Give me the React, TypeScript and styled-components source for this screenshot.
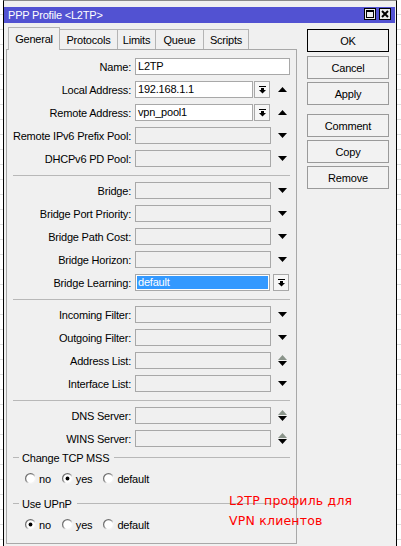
import { Fragment, useId } from "react";
import styled, { createGlobalStyle } from "styled-components";

type FieldKind = "text" | "combo" | "select" | "spin" | "pick";

type Field = {
  label: string;
  kind: FieldKind;
  value?: string;
};

const tabs = [
  { label: "General", width: 52, active: true },
  { label: "Protocols", width: 59 },
  { label: "Limits", width: 39 },
  { label: "Queue", width: 49 },
  { label: "Scripts", width: 46 },
];

const actions = [
  { label: "OK", primary: true },
  { label: "Cancel" },
  { label: "Apply" },
  { label: "Comment", spaced: true },
  { label: "Copy" },
  { label: "Remove" },
];

const sections: Field[][] = [
  [
    { label: "Name", kind: "text", value: "L2TP" },
    { label: "Local Address", kind: "combo", value: "192.168.1.1" },
    { label: "Remote Address", kind: "combo", value: "vpn_pool1" },
    { label: "Remote IPv6 Prefix Pool", kind: "select" },
    { label: "DHCPv6 PD Pool", kind: "select" },
  ],
  [
    { label: "Bridge", kind: "select" },
    { label: "Bridge Port Priority", kind: "select" },
    { label: "Bridge Path Cost", kind: "select" },
    { label: "Bridge Horizon", kind: "select" },
    { label: "Bridge Learning", kind: "pick", value: "default" },
  ],
  [
    { label: "Incoming Filter", kind: "select" },
    { label: "Outgoing Filter", kind: "select" },
    { label: "Address List", kind: "spin" },
    { label: "Interface List", kind: "select" },
  ],
  [
    { label: "DNS Server", kind: "spin" },
    { label: "WINS Server", kind: "spin" },
  ],
];

const radioGroups = [
  { title: "Change TCP MSS", selected: "yes", gap: 4 },
  { title: "Use UPnP", selected: "no", gap: 12 },
];

const radioChoices = ["no", "yes", "default"];

const GlobalStyle = createGlobalStyle`
  html, body {
    margin: 0;
    padding: 0;
  }

  body {
    background: #ffffff;
    color: #000000;
    font-family: "Liberation Sans", Arial, sans-serif;
    font-size: 11px;
    letter-spacing: -0.2px;
  }
`;

const Desktop = styled.div`
  position: relative;
  width: 401px;
  height: 546px;
  overflow: hidden;
  background: repeating-linear-gradient(to bottom, #ffffff 0 14px, #dedede 14px 15px);
`;

const Window = styled.div`
  box-sizing: border-box;
  width: 394px;
  height: 580px;
  margin-left: 3px;
  padding: 6px 1px 0 0;
  border-top: 1px solid #8a8a8a;
  border-left: 1px solid #000000;
  border-right: 1px solid #000000;
  background: #f0f0f0;
`;

const TitleBar = styled.div`
  display: flex;
  align-items: center;
  height: 16px;
  padding: 0 4px;
  background: #5252d2;
  color: #ffffff;
`;

const TitleText = styled.span`
  flex: 1;
  white-space: nowrap;
`;

const TitleButtons = styled.div`
  display: flex;
  gap: 3px;
  margin-top: -2px;
`;

const TitleButton = styled.span`
  display: flex;
  box-sizing: border-box;
  width: 12px;
  height: 12px;
  align-items: center;
  justify-content: center;
  border: 1px solid #000000;
  background: #ececec;
`;

const Body = styled.div`
  display: flex;
  gap: 10px;
  padding: 4px 0 0 2px;
`;

const LeftColumn = styled.div`
  display: flex;
  width: 291px;
  flex-direction: column;
`;

const TabStrip = styled.div`
  display: flex;
  height: 22px;
  align-items: flex-end;
  padding-left: 2px;
`;

const Tab = styled.div<{ $active?: boolean; $width: number }>`
  position: relative;
  z-index: ${(p) => (p.$active ? 1 : 0)};
  display: flex;
  box-sizing: border-box;
  width: ${(p) => p.$width}px;
  height: ${(p) => (p.$active ? 23 : 20)}px;
  margin-bottom: ${(p) => (p.$active ? -1 : 0)}px;
  padding-bottom: ${(p) => (p.$active ? 1 : 0)}px;
  align-items: center;
  justify-content: center;
  border: 1px solid #b4b4b4;
  border-bottom: none;
  background: #f0f0f0;

  & + & {
    margin-left: -1px;
  }
`;

const Panel = styled.div`
  box-sizing: border-box;
  height: 495px;
  padding: 8px 0 0;
  border: 1px solid #a8a8a8;
  background: #f0f0f0;
`;

const Form = styled.div`
  display: grid;
  grid-template-columns: 124px auto;
  column-gap: 4px;
  row-gap: 6px;
  align-items: center;
`;

const Label = styled.div`
  text-align: right;
  white-space: nowrap;
`;

const Separator = styled.div`
  grid-column: 1 / -1;
  box-sizing: border-box;
  height: 3px;
  margin: 0 6px;
  border-bottom: 1px solid #b8b8b8;
`;

const Control = styled.div`
  display: flex;
  width: 155px;
  height: 17px;
  align-items: center;
`;

const FieldBox = styled.div<{ $width: number; $tone: "edit" | "empty" | "selected" }>`
  box-sizing: border-box;
  width: ${(p) => p.$width}px;
  height: 17px;
  padding: 0 2px;
  border: 1px solid #a8a8a8;
  background: ${(p) => (p.$tone === "edit" ? "#ffffff" : p.$tone === "selected" ? "#3399ff" : "#f0f0f0")};
  box-shadow: ${(p) => (p.$tone === "selected" ? "inset 0 0 0 1px #ffffff" : "none")};
  color: ${(p) => (p.$tone === "selected" ? "#ffffff" : "#000000")};
  line-height: 15px;
  white-space: nowrap;
  overflow: hidden;
`;

const DropButton = styled.div<{ $gap: number }>`
  display: flex;
  box-sizing: border-box;
  width: 16px;
  height: 17px;
  margin-left: ${(p) => p.$gap}px;
  align-items: center;
  justify-content: center;
  border: 1px solid #a8a8a8;
  background: #f6f6f6;
`;

const ArrowSlot = styled.div`
  display: flex;
  width: 10px;
  margin: 0 3px 0 auto;
  flex-direction: column;
  align-items: center;
  gap: 1px;
`;

const GroupHeader = styled.div<{ $gap: number }>`
  display: flex;
  height: 13px;
  margin-top: ${(p) => p.$gap}px;
  padding: 0 6px;
  align-items: center;
  gap: 3px;

  &::before {
    content: "";
    width: 6px;
    border-top: 1px solid #b8b8b8;
  }

  &::after {
    content: "";
    flex: 1;
    margin-left: 2px;
    border-top: 1px solid #b8b8b8;
  }
`;

const RadioRow = styled.div`
  display: flex;
  height: 13px;
  margin-top: 8px;
  padding-left: 18px;
  align-items: center;
`;

const RadioOption = styled.label`
  display: inline-flex;
  margin-right: 11px;
  align-items: center;
  gap: 3px;
`;

const ButtonColumn = styled.div`
  display: flex;
  width: 82px;
  margin-top: 2px;
  flex-direction: column;
  gap: 3px;
`;

const ActionButton = styled.button<{ $primary?: boolean; $spaced?: boolean }>`
  height: 23px;
  margin-top: ${(p) => (p.$spaced ? 6 : 0)}px;
  margin-bottom: ${(p) => (p.$primary ? 1 : 0)}px;
  padding: 0;
  border: 1px solid ${(p) => (p.$primary ? "#000000" : "#9a9a9a")};
  background: #f2f2f2;
  color: #000000;
  font-family: inherit;
  font-size: 11px;
  letter-spacing: -0.2px;
`;

const Note = styled.div`
  position: absolute;
  top: 491px;
  left: 229px;
  color: #ff0000;
  font-family: "DejaVu Sans", "Liberation Sans", sans-serif;
  font-size: 12.5px;
  letter-spacing: 0.2px;
  line-height: 20px;
  white-space: nowrap;
`;

function TriangleDown({ color = "#000000" }: { color?: string }) {
  return (
    <svg width="9" height="5" viewBox="0 0 9 5">
      <polygon points="0,0 9,0 4.5,5" fill={color} />
    </svg>
  );
}

function TriangleUp({ color = "#000000" }: { color?: string }) {
  return (
    <svg width="9" height="5" viewBox="0 0 9 5">
      <polygon points="4.5,0 9,5 0,5" fill={color} />
    </svg>
  );
}

function DropGlyph() {
  return (
    <svg width="7" height="8" viewBox="0 0 7 8">
      <rect x="0" y="0" width="7" height="1" fill="#000000" />
      <rect x="2" y="2" width="3" height="2" fill="#000000" />
      <polygon points="0,4 7,4 3.5,7.5" fill="#000000" />
    </svg>
  );
}

function Radio({ checked }: { checked?: boolean }) {
  const id = "rg" + useId().replace(/[^a-zA-Z0-9]/g, "");
  return (
    <svg width="11" height="11" viewBox="0 0 11 11">
      <defs>
        <linearGradient id={id} x1="0" y1="0" x2="1" y2="1">
          <stop offset="0.35" stopColor="#6e6e6e" />
          <stop offset="0.65" stopColor="#f4f4f4" />
        </linearGradient>
      </defs>
      <circle cx="5.5" cy="5.5" r="4.9" fill="#ffffff" stroke={`url(#${id})`} strokeWidth="1.2" />
      {checked && <circle cx="5.5" cy="5.5" r="1.9" fill="#000000" />}
    </svg>
  );
}

function FieldControl({ field }: { field: Field }) {
  switch (field.kind) {
    case "text":
      return (
        <Control>
          <FieldBox $width={155} $tone="edit">
            {field.value}
          </FieldBox>
        </Control>
      );
    case "combo":
      return (
        <Control>
          <FieldBox $width={118} $tone="edit">
            {field.value}
          </FieldBox>
          <DropButton $gap={1}>
            <DropGlyph />
          </DropButton>
          <ArrowSlot>
            <TriangleUp />
          </ArrowSlot>
        </Control>
      );
    case "pick":
      return (
        <Control>
          <FieldBox $width={135} $tone="selected">
            {field.value}
          </FieldBox>
          <DropButton $gap={3}>
            <DropGlyph />
          </DropButton>
        </Control>
      );
    case "spin":
      return (
        <Control>
          <FieldBox $width={136} $tone="empty" />
          <ArrowSlot>
            <TriangleUp color="#8a948a" />
            <TriangleDown />
          </ArrowSlot>
        </Control>
      );
    default:
      return (
        <Control>
          <FieldBox $width={136} $tone="empty" />
          <ArrowSlot>
            <TriangleDown />
          </ArrowSlot>
        </Control>
      );
  }
}

export default function App() {
  return (
    <>
      <GlobalStyle />
      <Desktop>
        <Window>
          <TitleBar>
            <TitleText>PPP Profile &lt;L2TP&gt;</TitleText>
            <TitleButtons>
              <TitleButton>
                <svg width="8" height="8" viewBox="0 0 8 8">
                  <rect x="0.5" y="0.5" width="7" height="7" fill="none" stroke="#000000" />
                  <rect x="0" y="0" width="8" height="2" fill="#000000" />
                </svg>
              </TitleButton>
              <TitleButton>
                <svg width="8" height="8" viewBox="0 0 8 8">
                  <path d="M1 1 L7 7 M7 1 L1 7" stroke="#000000" strokeWidth="2" />
                </svg>
              </TitleButton>
            </TitleButtons>
          </TitleBar>
          <Body>
            <LeftColumn>
              <TabStrip>
                {tabs.map((tab) => (
                  <Tab key={tab.label} $active={tab.active} $width={tab.width}>
                    {tab.label}
                  </Tab>
                ))}
              </TabStrip>
              <Panel>
                <Form>
                  {sections.map((section, index) => (
                    <Fragment key={`section-${index}`}>
                      {index > 0 && <Separator />}
                      {section.map((field) => (
                        <Fragment key={field.label}>
                          <Label>{field.label}:</Label>
                          <FieldControl field={field} />
                        </Fragment>
                      ))}
                    </Fragment>
                  ))}
                </Form>
                {radioGroups.map((group) => (
                  <div key={group.title}>
                    <GroupHeader $gap={group.gap}>{group.title}</GroupHeader>
                    <RadioRow>
                      {radioChoices.map((choice) => (
                        <RadioOption key={choice}>
                          <Radio checked={group.selected === choice} />
                          {choice}
                        </RadioOption>
                      ))}
                    </RadioRow>
                  </div>
                ))}
              </Panel>
            </LeftColumn>
            <ButtonColumn>
              {actions.map((action) => (
                <ActionButton key={action.label} $primary={action.primary} $spaced={action.spaced}>
                  {action.label}
                </ActionButton>
              ))}
            </ButtonColumn>
          </Body>
        </Window>
        <Note>
          L2TP профиль для
          <br />
          VPN клиентов
        </Note>
      </Desktop>
    </>
  );
}
